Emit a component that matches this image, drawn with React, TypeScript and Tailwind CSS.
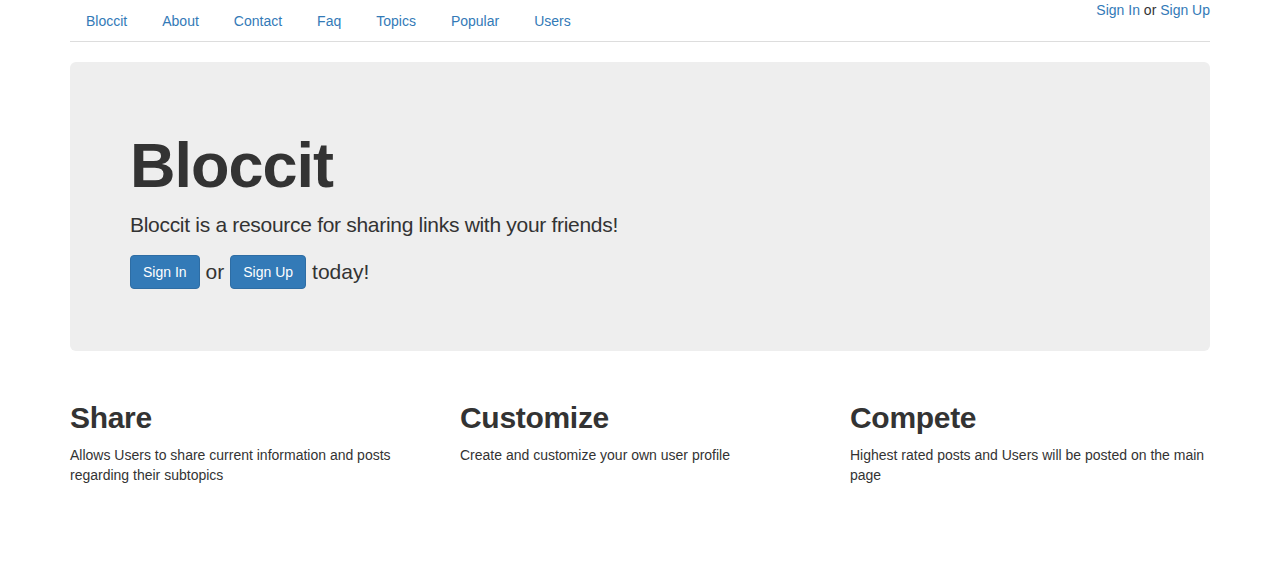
import React from "react";

const links = ["Bloccit", "About", "Contact", "Faq", "Topics", "Popular", "Users"];

const cols = [
  { t: "Share", d: "Allows Users to share current information and posts regarding their subtopics" },
  { t: "Customize", d: "Create and customize your own user profile" },
  { t: "Compete", d: "Highest rated posts and Users will be posted on the main page" },
];

export default function App() {
  return (
    <div
      className="min-h-[561px] bg-white text-[#333] text-[14px] leading-[20px]"
      style={{ fontFamily: '"Liberation Sans", Arial, sans-serif' }}
    >
      <div className="w-[1170px] mx-auto px-[15px]">
        <div className="relative">
          <div className="absolute right-0 top-0 text-[14px] leading-[20px]">
            <a className="text-[#337ab7]" href="#">Sign In</a> or{" "}
            <a className="text-[#337ab7]" href="#">Sign Up</a>
          </div>
          <ul className="flex border-b border-[#ddd]">
            {links.map((l) => (
              <li key={l} className="mr-[3px] -mb-px">
                <a
                  href="#"
                  className="block border border-transparent px-[15px] py-[10px] leading-[20px] text-[#337ab7]"
                >
                  {l}
                </a>
              </li>
            ))}
          </ul>
        </div>

        <div className="mt-[20px] mb-[30px] bg-[#eee] rounded-[6px] h-[289px] px-[60px] pt-[69px]">
          <h1 className="text-[63px] leading-[69px] font-semibold tracking-[-1px] text-[#333]">Bloccit</h1>
          <p className="mt-[10px] text-[21px] leading-[30px] font-light tracking-[-0.3px]">
            Bloccit is a resource for sharing links with your friends!
          </p>
          <p className="mt-[15px] text-[21px] leading-[30px] font-light flex items-center">
            <a
              href="#"
              className="inline-block whitespace-nowrap bg-[#337ab7] border border-[#2e6da4] rounded-[4px] text-white text-[14px] leading-[20px] px-[12px] py-[6px]"
            >
              Sign In
            </a>
            <span className="mx-[6px]">or</span>
            <a
              href="#"
              className="inline-block whitespace-nowrap bg-[#337ab7] border border-[#2e6da4] rounded-[4px] text-white text-[14px] leading-[20px] px-[12px] py-[6px]"
            >
              Sign Up
            </a>
            <span className="ml-[6px]">today!</span>
          </p>
        </div>

        <div className="grid grid-cols-3 -mx-[15px]">
          {cols.map((c) => (
            <div key={c.t} className="px-[15px]">
              <h2 className="mt-[20px] mb-[11px] text-[30px] leading-[33px] font-semibold tracking-[-0.3px]">{c.t}</h2>
              <p className="text-[14px] leading-[20px]">{c.d}</p>
            </div>
          ))}
        </div>
      </div>
    </div>
  );
}
